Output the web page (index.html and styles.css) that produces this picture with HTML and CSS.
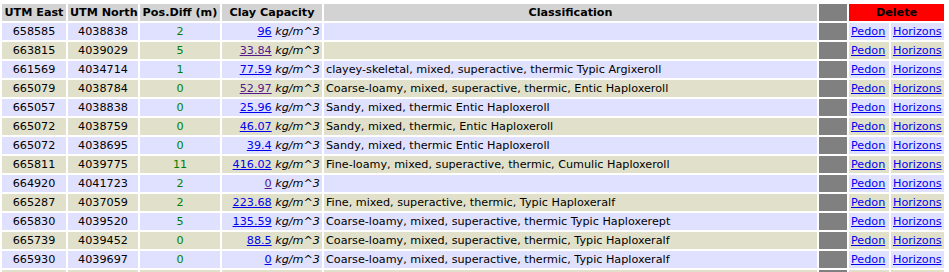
FILE: index.html
```html
<!DOCTYPE html>
<html>
<head>
<meta charset="utf-8">
<link rel="stylesheet" href="styles.css">
</head>
<body>
<table class="grid">
<colgroup>
<col class="c-east"><col class="c-north"><col class="c-diff"><col class="c-clay"><col class="c-class"><col class="c-grey"><col class="c-pedon"><col class="c-hor">
</colgroup>
<thead>
<tr>
<th>UTM East</th><th>UTM North</th><th>Pos.Diff (m)</th><th>Clay Capacity</th><th>Classification</th><th class="grey"></th><th class="del" colspan="2">Delete</th>
</tr>
</thead>
<tbody>
<tr class="a"><td class="num">658585</td><td class="num">4038838</td><td class="diff">2</td><td class="clay"><a href="#">96</a> <i>kg/m^3</i></td><td class="cls"></td><td class="grey"></td><td class="lnk"><a href="#">Pedon</a></td><td class="lnk"><a href="#">Horizons</a></td></tr>
<tr class="b"><td class="num">663815</td><td class="num">4039029</td><td class="diff">5</td><td class="clay"><a href="#" class="vis">33.84</a> <i>kg/m^3</i></td><td class="cls"></td><td class="grey"></td><td class="lnk"><a href="#">Pedon</a></td><td class="lnk"><a href="#">Horizons</a></td></tr>
<tr class="a"><td class="num">661569</td><td class="num">4034714</td><td class="diff">1</td><td class="clay"><a href="#">77.59</a> <i>kg/m^3</i></td><td class="cls">clayey-skeletal, mixed, superactive, thermic Typic Argixeroll</td><td class="grey"></td><td class="lnk"><a href="#">Pedon</a></td><td class="lnk"><a href="#">Horizons</a></td></tr>
<tr class="b"><td class="num">665079</td><td class="num">4038784</td><td class="diff">0</td><td class="clay"><a href="#" class="vis">52.97</a> <i>kg/m^3</i></td><td class="cls">Coarse-loamy, mixed, superactive, thermic, Entic Haploxeroll</td><td class="grey"></td><td class="lnk"><a href="#">Pedon</a></td><td class="lnk"><a href="#">Horizons</a></td></tr>
<tr class="a"><td class="num">665057</td><td class="num">4038838</td><td class="diff">0</td><td class="clay"><a href="#">25.96</a> <i>kg/m^3</i></td><td class="cls">Sandy, mixed, thermic Entic Haploxeroll</td><td class="grey"></td><td class="lnk"><a href="#">Pedon</a></td><td class="lnk"><a href="#">Horizons</a></td></tr>
<tr class="b"><td class="num">665072</td><td class="num">4038759</td><td class="diff">0</td><td class="clay"><a href="#">46.07</a> <i>kg/m^3</i></td><td class="cls">Sandy, mixed, thermic, Entic Haploxeroll</td><td class="grey"></td><td class="lnk"><a href="#">Pedon</a></td><td class="lnk"><a href="#">Horizons</a></td></tr>
<tr class="a"><td class="num">665072</td><td class="num">4038695</td><td class="diff">0</td><td class="clay"><a href="#">39.4</a> <i>kg/m^3</i></td><td class="cls">Sandy, mixed, thermic Entic Haploxeroll</td><td class="grey"></td><td class="lnk"><a href="#">Pedon</a></td><td class="lnk"><a href="#">Horizons</a></td></tr>
<tr class="b"><td class="num">665811</td><td class="num">4039775</td><td class="diff">11</td><td class="clay"><a href="#">416.02</a> <i>kg/m^3</i></td><td class="cls">Fine-loamy, mixed, superactive, thermic, Cumulic Haploxeroll</td><td class="grey"></td><td class="lnk"><a href="#">Pedon</a></td><td class="lnk"><a href="#">Horizons</a></td></tr>
<tr class="a"><td class="num">664920</td><td class="num">4041723</td><td class="diff">2</td><td class="clay"><a href="#" class="vis">0</a> <i>kg/m^3</i></td><td class="cls"></td><td class="grey"></td><td class="lnk"><a href="#">Pedon</a></td><td class="lnk"><a href="#">Horizons</a></td></tr>
<tr class="b"><td class="num">665287</td><td class="num">4037059</td><td class="diff">2</td><td class="clay"><a href="#">223.68</a> <i>kg/m^3</i></td><td class="cls">Fine, mixed, superactive, thermic, Typic Haploxeralf</td><td class="grey"></td><td class="lnk"><a href="#">Pedon</a></td><td class="lnk"><a href="#">Horizons</a></td></tr>
<tr class="a"><td class="num">665830</td><td class="num">4039520</td><td class="diff">5</td><td class="clay"><a href="#">135.59</a> <i>kg/m^3</i></td><td class="cls">Coarse-loamy, mixed, superactive, thermic Typic Haploxerept</td><td class="grey"></td><td class="lnk"><a href="#">Pedon</a></td><td class="lnk"><a href="#">Horizons</a></td></tr>
<tr class="b"><td class="num">665739</td><td class="num">4039452</td><td class="diff">0</td><td class="clay"><a href="#">88.5</a> <i>kg/m^3</i></td><td class="cls">Coarse-loamy, mixed, superactive, thermic, Typic Haploxeralf</td><td class="grey"></td><td class="lnk"><a href="#">Pedon</a></td><td class="lnk"><a href="#">Horizons</a></td></tr>
<tr class="a"><td class="num">665930</td><td class="num">4039697</td><td class="diff">0</td><td class="clay"><a href="#">0</a> <i>kg/m^3</i></td><td class="cls">Coarse-loamy, mixed, superactive, thermic, Typic Haploxeralf</td><td class="grey"></td><td class="lnk"><a href="#">Pedon</a></td><td class="lnk"><a href="#">Horizons</a></td></tr>
<tr class="b"><td class="num"></td><td class="num"></td><td class="diff"></td><td class="clay"></td><td class="cls"></td><td class="grey"></td><td class="lnk"></td><td class="lnk"></td></tr>
</tbody>
</table>
</body>
</html>
```
FILE: styles.css
```css
html, body {
  margin: 0;
  padding: 0;
  background: #ffffff;
}
body {
  font-family: "DejaVu Sans", Verdana, sans-serif;
  font-size: 11.2px;
  color: #000000;
}
.grid {
  margin-top: 2px;
  border-collapse: separate;
  border-spacing: 2px;
  table-layout: fixed;
  width: 946px;
}
.c-east { width: 64px; }
.c-north { width: 70px; }
.c-diff { width: 80px; }
.c-clay { width: 100px; }
.c-class { width: 493px; }
.c-grey { width: 28px; }
.c-pedon { width: 40px; }
.c-hor { width: 53px; }
.grid th,
.grid td {
  padding: 2px 2px;
  height: 13px;
  line-height: 13px;
  white-space: nowrap;
  overflow: hidden;
}
.grid th {
  background: #d3d3d3;
  font-weight: bold;
  text-align: center;
}
.grid th.del {
  background: #ff0000;
}
.grid .grey {
  background: #808080;
}
tr.a td { background: #e0e0ff; }
tr.b td { background: #e1e1cb; }
tr.a td.grey, tr.b td.grey { background: #808080; }
.num { text-align: center; }
.diff { text-align: center; color: #008000; }
.clay { text-align: right; padding-right: 3px; }
.cls { text-align: left; padding-left: 3px; }
.lnk { text-align: left; }
a { color: #0000ee; text-decoration: underline; }
a.vis { color: #551a8b; }
```
